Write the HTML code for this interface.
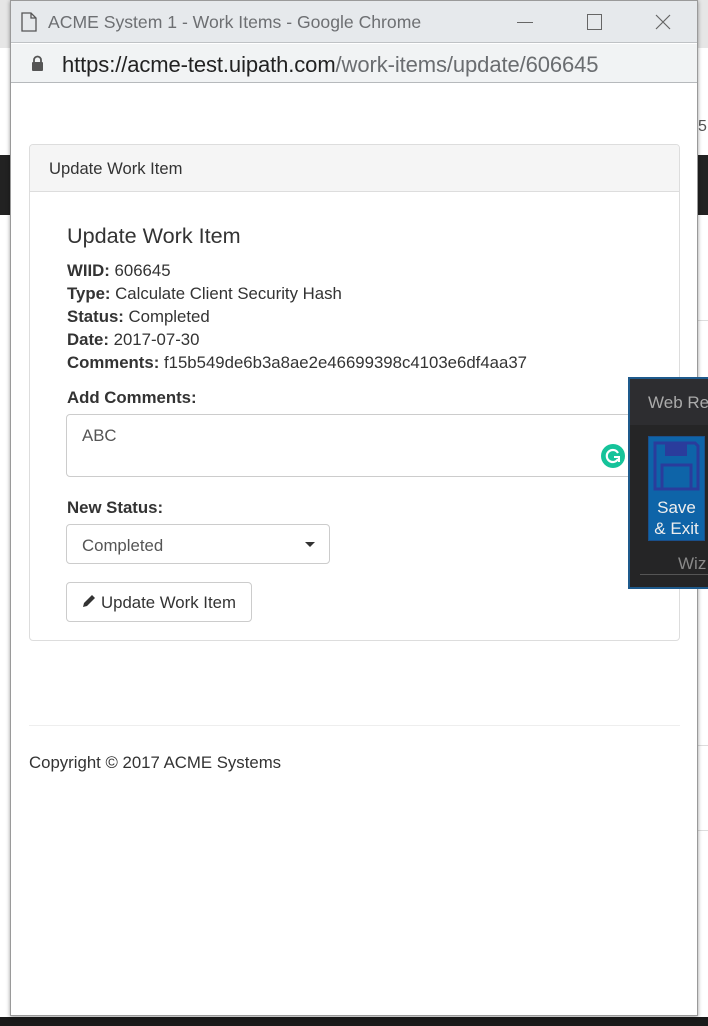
<!DOCTYPE html>
<html><head><meta charset="utf-8"><style>
*{margin:0;padding:0;box-sizing:border-box}
body{width:708px;height:1026px;position:relative;overflow:hidden;background:#fff;font-family:"Liberation Sans",Arial,sans-serif;color:#333}
.a{position:absolute}
.t{font-size:16.8px;white-space:nowrap}
b{font-weight:bold}
</style></head><body>
<div class="a" style="left:0;top:0;width:708px;height:48px;background:#e6e6e6"></div>
<div class="a" style="left:0;top:155px;width:708px;height:60px;background:#222"></div>
<div class="a" style="left:698px;top:118px;font-size:16px;color:#555">5</div>
<div class="a" style="left:698px;top:320px;width:10px;height:1px;background:#ddd"></div>
<div class="a" style="left:698px;top:745px;width:10px;height:1px;background:#ddd"></div>
<div class="a" style="left:698px;top:830px;width:10px;height:1px;background:#ddd"></div>
<div class="a" style="left:0;top:1017px;width:708px;height:9px;background:#1a1a1a"></div>
<div class="a" style="left:10px;top:0;width:688px;height:1016px;background:#fff;border:1px solid #9a9a9a;box-shadow:0 1px 4px rgba(0,0,0,.4)"></div>
<div class="a" style="left:11px;top:1px;width:686px;height:42px;background:#e6e9ec;border-bottom:1px solid #bfc2c5"></div>
<svg class="a" style="left:21px;top:12px" width="16" height="20" viewBox="0 0 16 20"><path d="M1 1h9l5 5v13H1z M10 1v5h5" fill="none" stroke="#555" stroke-width="1.3"/></svg>
<div class="a" style="left:48px;top:12px;font-size:17.6px;color:#6d6f72">ACME System 1 - Work Items - Google Chrome</div>
<div class="a" style="left:517px;top:22px;width:16px;height:1px;background:#666"></div>
<div class="a" style="left:587px;top:14px;width:15px;height:16px;border:1px solid #666"></div>
<svg class="a" style="left:655px;top:14px" width="16" height="16"><path d="M1 1L15 15M15 1L1 15" stroke="#666" stroke-width="1.2"/></svg>
<div class="a" style="left:11px;top:44px;width:686px;height:39px;background:#f1f3f4;border-bottom:1px solid #b6b9bc"></div>
<svg class="a" style="left:31px;top:55px" width="13" height="17" viewBox="0 0 13 17"><path d="M3 7V5a3.5 3.5 0 0 1 7 0v2" fill="none" stroke="#555" stroke-width="1.8"/><rect x="1" y="7" width="11" height="9" rx="1" fill="#555"/></svg>
<div class="a" style="left:62px;top:52px;font-size:22px;color:#6a6d70;letter-spacing:-.1px"><span style="color:#222">https://acme-test.uipath.com</span>/work-items/update/606645</div>
<div class="a" style="left:29px;top:144px;width:651px;height:497px;border:1px solid #ddd;border-radius:4px"></div>
<div class="a" style="left:30px;top:145px;width:649px;height:47px;background:#f5f5f5;border-bottom:1px solid #ddd;border-radius:3px 3px 0 0"></div>
<div class="a t" style="left:49px;top:159px;font-size:16.6px">Update Work Item</div>
<div class="a" style="left:67px;top:223px;font-size:21.6px;color:#333">Update Work Item</div>
<div class="a t" style="left:67px;top:261px"><b>WIID:</b> 606645</div>
<div class="a t" style="left:67px;top:284px"><b>Type:</b> Calculate Client Security Hash</div>
<div class="a t" style="left:67px;top:307px"><b>Status:</b> Completed</div>
<div class="a t" style="left:67px;top:330px"><b>Date:</b> 2017-07-30</div>
<div class="a t" style="left:67px;top:353px"><b>Comments:</b> f15b549de6b3a8ae2e46699398c4103e6df4aa37</div>
<div class="a t" style="left:67px;top:388px"><b>Add Comments:</b></div>
<div class="a" style="left:66px;top:414px;width:580px;height:63px;border:1px solid #ccc;border-radius:4px"></div>
<div class="a t" style="left:82px;top:426px;color:#555">ABC</div>
<div class="a" style="left:601px;top:444px;width:24px;height:24px;border-radius:50%;background:#15c39a"></div>
<svg class="a" style="left:601px;top:444px" width="24" height="24" viewBox="0 0 24 24"><path d="M17 9A6 6 0 1 0 17 15" fill="none" stroke="#fff" stroke-width="2.2"/><path d="M13 13h5v5" fill="none" stroke="#fff" stroke-width="2"/></svg>
<div class="a t" style="left:67px;top:498px"><b>New Status:</b></div>
<div class="a" style="left:66px;top:524px;width:264px;height:40px;border:1px solid #ccc;border-radius:4px"></div>
<div class="a t" style="left:82px;top:536px;color:#555">Completed</div>
<div class="a" style="left:305px;top:542px;width:0;height:0;border-left:5px solid transparent;border-right:5px solid transparent;border-top:5px solid #333"></div>
<div class="a" style="left:66px;top:582px;width:186px;height:40px;border:1px solid #ccc;border-radius:4px"></div>
<svg class="a" style="left:82px;top:594px" width="14" height="14" viewBox="0 0 14 14"><path d="M1 13l1-4 8-8 3 3-8 8z" fill="#333"/></svg>
<div class="a t" style="left:101px;top:593px">Update Work Item</div>
<div class="a" style="left:29px;top:725px;width:651px;height:1px;background:#eee"></div>
<div class="a t" style="left:29px;top:753px">Copyright © 2017 ACME Systems</div>
<div class="a" style="left:628px;top:377px;width:82px;height:212px;background:#252526;border:2px solid #1e5a8c;border-right:none"></div>
<div class="a" style="left:630px;top:379px;width:78px;height:46px;background:#2d2d30"></div>
<div class="a" style="left:648px;top:393px;font-size:17px;color:#aaa;white-space:nowrap">Web Re</div>
<div class="a" style="left:648px;top:436px;width:57px;height:105px;background:#0e64a8;border:1px solid #1a4f8a"></div>
<svg class="a" style="left:653px;top:441px" width="47" height="50" viewBox="0 0 47 50"><path d="M2 2h40l3 3v43H2z" fill="none" stroke="#2a3c9c" stroke-width="3"/><rect x="12" y="2" width="22" height="13" fill="#2a3c9c"/><rect x="9" y="24" width="29" height="24" fill="none" stroke="#2a3c9c" stroke-width="3"/></svg>
<div class="a" style="left:648px;top:497px;width:57px;text-align:center;font-size:17px;line-height:21px;color:#eee">Save<br>&amp; Exit</div>
<div class="a" style="left:678px;top:554px;font-size:17px;color:#888">Wiz</div>
<div class="a" style="left:640px;top:574px;width:68px;height:1px;background:#555"></div>
</body></html>
